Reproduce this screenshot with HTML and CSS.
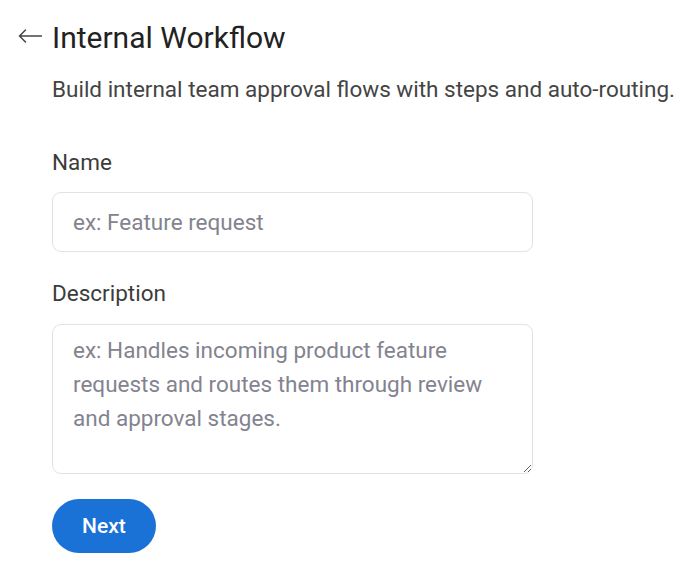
FILE: index.html
```html
<!DOCTYPE html>
<html lang="en">
<head>
<meta charset="utf-8">
<title>Internal Workflow</title>
<link rel="stylesheet" href="styles.css">
</head>
<body>
<div class="page">
  <header class="header">
    <button class="back" aria-label="Back">
      <svg width="24" height="24" viewBox="0 0 24 24" fill="none" stroke="#444" stroke-width="1.5" stroke-linecap="round" stroke-linejoin="round"><path d="M23.5 10H1.5M7.5 4l-6 6 6 6"/></svg>
    </button>
    <h1 class="title">Internal Workflow</h1>
  </header>
  <div class="content">
    <p class="subtitle">Build internal team approval flows with steps and auto-routing.</p>
    <form class="form">
      <label class="field">
        <span class="label">Name</span>
        <input class="input" type="text" placeholder="ex: Feature request">
      </label>
      <label class="field field-last">
        <span class="label">Description</span>
        <textarea class="input textarea" placeholder="ex: Handles incoming product feature requests and routes them through review and approval stages."></textarea>
      </label>
      <div class="actions">
        <button type="button" class="btn-primary">Next</button>
      </div>
    </form>
  </div>
</div>
</body>
</html>
```
FILE: styles.css
```css
* { box-sizing: border-box; }
html, body { margin: 0; background: #fff; }
body { font-family: Roboto, "Noto Sans", Arial, sans-serif; color: #333; }
.page { padding: 20px 0 0 18px; }
.header { display: flex; align-items: center; gap: 10px; height: 36px; }
.back { border: 0; background: none; padding: 0; width: 24px; height: 24px; display: flex; cursor: pointer; }
.title { margin: 0; font-size: 30px; font-weight: 400; color: #222; line-height: 36px; }
.content { padding-left: 34px; }
.subtitle { margin: 20px 0 0; font-size: 22.5px; line-height: 26px; color: #444; }
.form { display: flex; flex-direction: column; margin-top: 47px; width: 481px; }
.field { display: flex; flex-direction: column; gap: 17px; margin-bottom: 28px; }
.field-last { gap: 18px; margin-bottom: 25px; }
.label { font-size: 22.5px; line-height: 26px; color: #3c3c3c; }
.input { display: block; width: 100%; height: 60px; border: 1px solid #e2e2e2; border-radius: 9px; padding: 0 20px; font-family: inherit; font-size: 22.5px; color: #333; outline: none; background: #fff; }
.input::placeholder { color: #83838f; }
.textarea { height: 150px; padding: 8px 20px; line-height: 34px; resize: vertical; }
.actions { display: flex; }
.btn-primary { height: 54px; padding: 0 30px; border: 0; border-radius: 27px; background: #1a71d6; color: #fff; font-family: inherit; font-size: 21px; font-weight: 500; cursor: pointer; }
```
